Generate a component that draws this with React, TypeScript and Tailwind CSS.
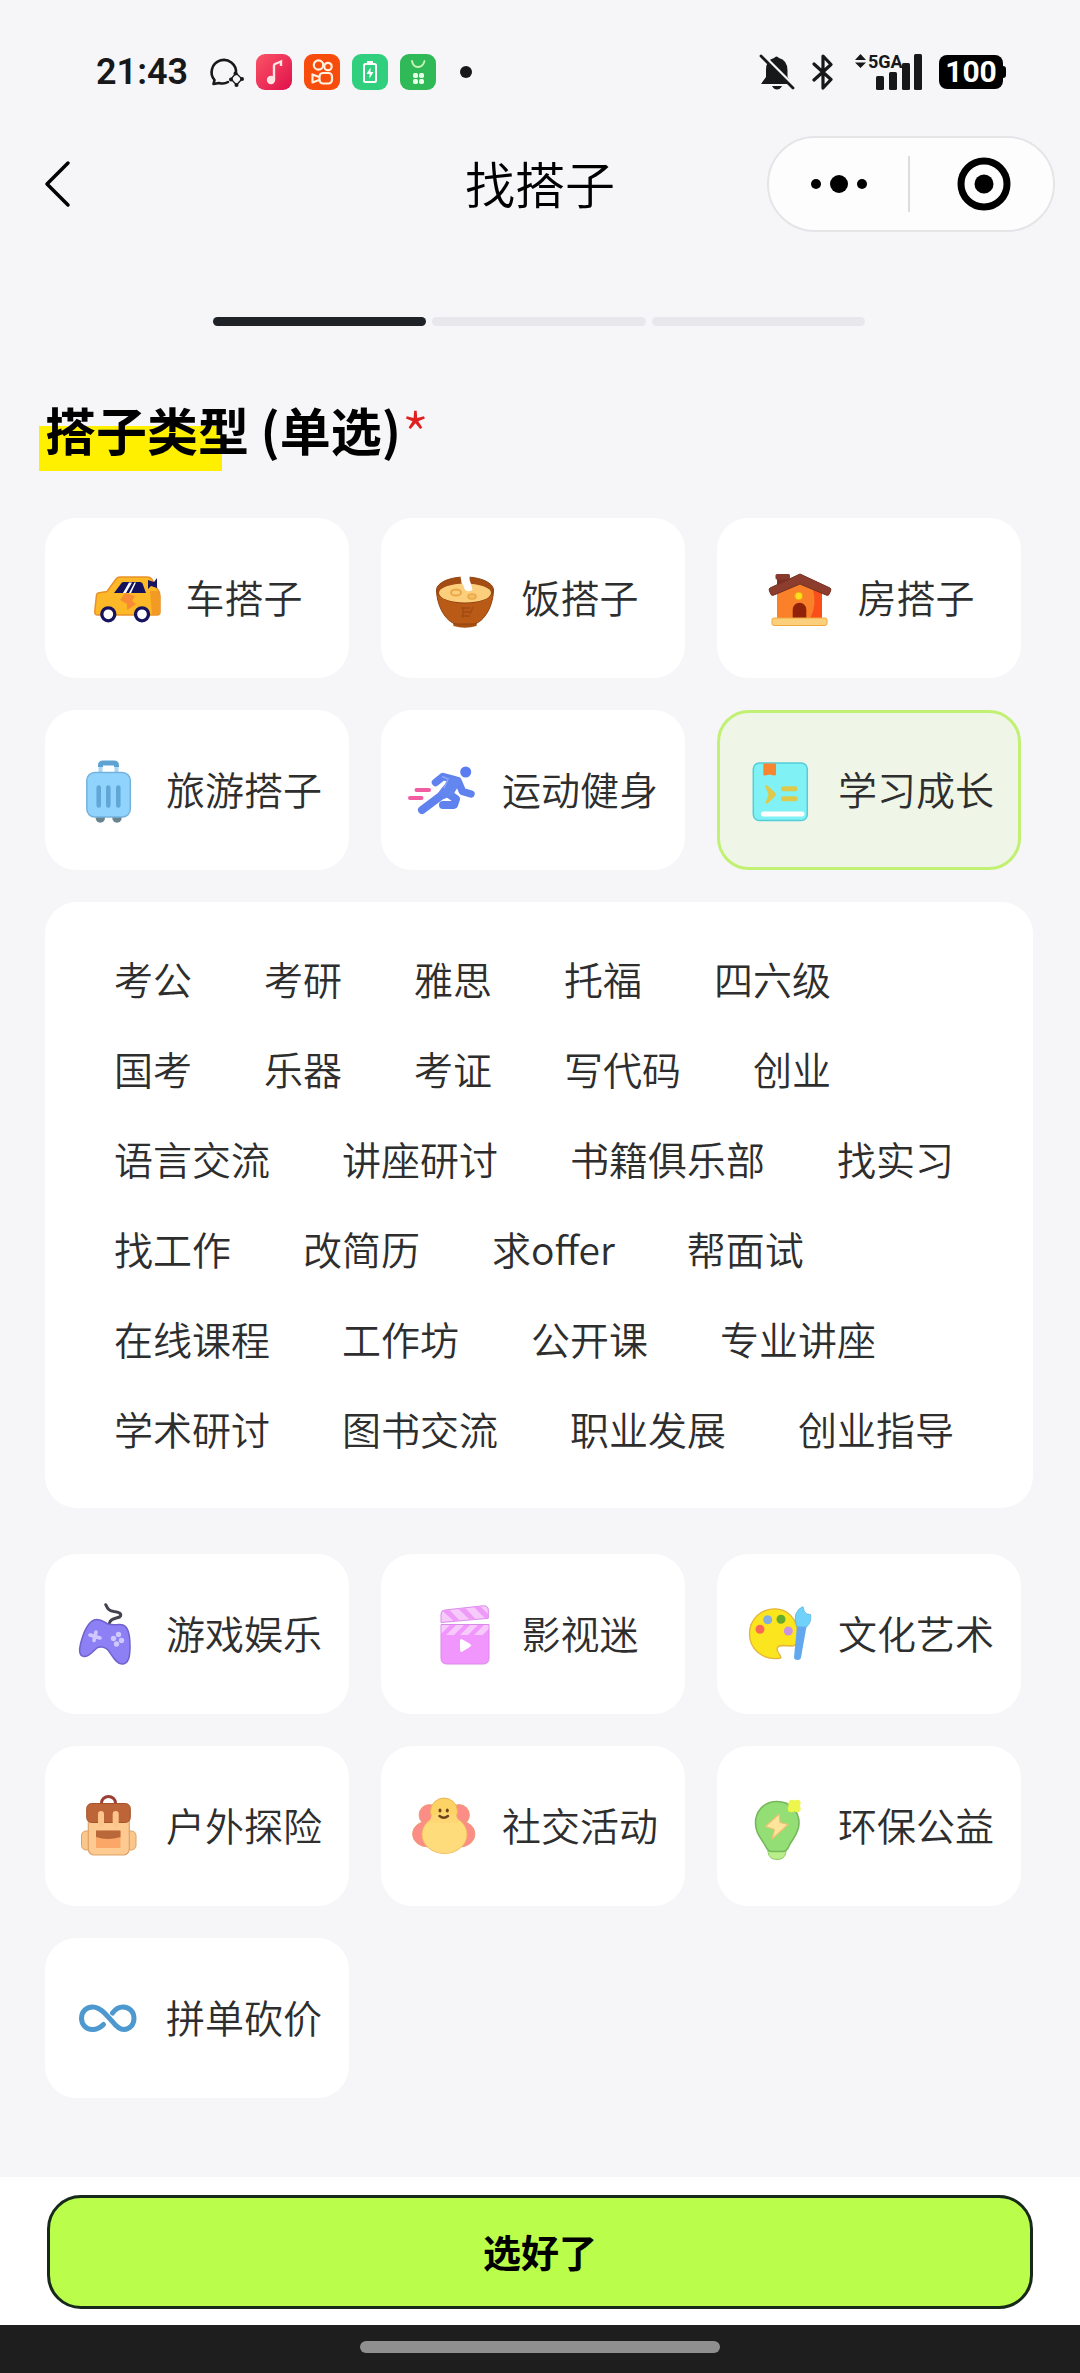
import React, { useState } from 'react';

interface Category {
  id: string;
  label: string;
  icon: React.ReactNode;
}

function CarIcon() {
  return (
    <svg viewBox="0 0 72 72" className="w-[72px] h-[72px] shrink-0" aria-hidden="true">
      <path d="M7 31 L16 29.5 L25 17 Q26.5 15 29 15 H56 Q60 15 62 19 L67 28 Q69 30 69 34 V50 Q69 53 66 53 H6 Q3.500 53 3.800 49 L5.500 33 Q6 31 7 31 Z" fill="#fdb827" stroke="#e8912a" strokeWidth="1.500" />
      <path d="M59 29 H67 Q69 31 69 34 V50 Q69 53 66 53 H61 Z" fill="#f39a25" />
      <path d="M23 31 L30.500 21 Q31 20 33 20 H49 Q51 20 51.500 21.500 L55 31 Z" fill="#14125c" />
      <path d="M32 31 L38 20.500 H41 L35 31 Z M38 31 L43.500 20.500 H45 L40 31 Z" fill="#ffffff" />
      <path d="M34 31 L44 34 L41 39 L45 42 L36 48 L36 42 L29 38 Z" fill="#f98b35" />
      <path d="M57 18 L63 20 L66 16 V26 L60 24 L57 27 Z" fill="#1b1660" />
      <circle cx="17.300" cy="52.300" r="6.500" fill="#ffffff" stroke="#16135f" strokeWidth="3.300" />
      <circle cx="51" cy="52.300" r="6.500" fill="#ffffff" stroke="#16135f" strokeWidth="3.300" />
    </svg>
  );
}

function BowlIcon() {
  return (
    <svg viewBox="0 0 72 72" className="w-[72px] h-[72px] shrink-0" aria-hidden="true">
      <path d="M26 60 H50 L49.500 64 Q38 67.500 26.500 64 Z" fill="#a8500f" />
      <path d="M9.500 28 C10 48 22 62 30 62 H46 C54 62 66 48 66.500 28 Z" fill="#b95a17" stroke="#8f4412" strokeWidth="1" />
      <ellipse cx="38" cy="28" rx="28.500" ry="13" fill="#a34d14" stroke="#8f4412" strokeWidth="1" />
      <ellipse cx="38" cy="31" rx="26" ry="9.500" fill="#fbcf7c" />
      <ellipse cx="29" cy="30.500" rx="5" ry="3" fill="#fbcf7c" stroke="#e9a848" strokeWidth="2" />
      <ellipse cx="45" cy="34.500" rx="4" ry="2.500" fill="#f5bd62" stroke="#e9a848" strokeWidth="1.500" />
      <path d="M33.500 14 H42.500 Q42 18 44 22 L45.500 28 Q40 31 37.500 27 Q36.500 23 34.500 21 Z" fill="#ffffff" />
      <path d="M34 46 H43 M35 50 H43 M34 54 H43 M36 45 V56 M46 45 L43 52" stroke="#a04c14" strokeWidth="1.300" fill="none" />
    </svg>
  );
}

function HouseIcon() {
  return (
    <svg viewBox="0 0 72 72" className="w-[72px] h-[72px] shrink-0" aria-hidden="true">
      <rect x="14" y="15" width="12" height="12" fill="#7d3126" />
      <rect x="12.500" y="12" width="14.500" height="5.500" rx="1.500" fill="#8a3a2c" />
      <path d="M14 29 L36.500 19 L59 29 V57 H14 Z" fill="#fa802a" />
      <path d="M49 24 L59 29 V57 H47 Q55 42 49 24 Z" fill="#f9501b" />
      <path d="M37 12 L67 26 Q68.500 27 67.500 29 L66 32.500 Q65 34 63 33 L37 22 L11 33 Q9 34 8 32.500 L6.500 29 Q5.500 27 7 26 Z" fill="#8c3d2e" stroke="#75301f" strokeWidth="1" />
      <circle cx="35.700" cy="34" r="4" fill="#ffdd1f" stroke="#ef9b1a" strokeWidth="1" />
      <path d="M29.700 57 V47.500 A6.800 6.800 0 0 1 43.300 47.500 V57 Z" fill="#8f2208" />
      <rect x="9" y="56" width="55" height="7.500" rx="2" fill="#fccf7c" stroke="#f0a93c" strokeWidth="1" />
    </svg>
  );
}

function SuitcaseIcon() {
  return (
    <svg viewBox="0 0 72 72" className="w-[72px] h-[72px] shrink-0" aria-hidden="true">
      <circle cx="28.300" cy="64" r="4.700" fill="#69838f" />
      <circle cx="45" cy="64" r="4.700" fill="#69838f" />
      <path d="M28.500 19 V11.500 Q28.500 9 31 9 H42 Q44.500 9 44.500 11.500 V19" fill="none" stroke="#a9d8f5" strokeWidth="4" />
      <path d="M28.500 13 V11.500 Q28.500 9 31 9 H42 Q44.500 9 44.500 11.500 V13" fill="none" stroke="#5fa3d3" strokeWidth="5" />
      <rect x="14.800" y="18.500" width="43.500" height="44.500" rx="8" fill="#90d3fd" stroke="#74b2dc" strokeWidth="1.500" />
      <path d="M26.700 33.500 V51.500 M36.300 33.500 V51.500 M46.300 33.500 V51.500" stroke="#60a6d6" strokeWidth="4.500" strokeLinecap="round" />
    </svg>
  );
}

function RunnerIcon() {
  return (
    <svg viewBox="0 0 72 72" className="w-[72px] h-[72px] shrink-0" aria-hidden="true">
      <path d="M8.500 36 H21 M2 44 H13.500" stroke="#f25ca2" strokeWidth="4" strokeLinecap="round" />
      <circle cx="57.700" cy="18" r="5.500" fill="#5b7cf0" />
      <g fill="none" stroke="#5f82ee" strokeLinecap="round" strokeLinejoin="round">
        <path d="M27.500 28.500 L35 22.500 L48 26" strokeWidth="7.500" />
        <path d="M50 27 L54.500 37.500 L63 40" strokeWidth="7.500" />
        <path d="M38 38 L14 56" strokeWidth="8" />
        <path d="M38 38 L48 45 L46 51 L35 51" strokeWidth="8" />
      </g>
      <path d="M35 22 L51 24.500 Q54 26 51 31 L45 41 L36 45 L30 39 Q34 33 40 27 Z" fill="#6487ef" />
      <path d="M34 22.500 L40 25 L36 34" fill="none" stroke="#8ba6f5" strokeWidth="1.500" />
    </svg>
  );
}

function BookIcon() {
  return (
    <svg viewBox="0 0 72 72" className="w-[72px] h-[72px] shrink-0" aria-hidden="true">
      <rect x="9.300" y="9" width="54" height="57.500" rx="6" fill="#80f1f5" stroke="#54cdd8" strokeWidth="1.500" />
      <path d="M19.300 9.500 H32 V20 Q32 21.700 30 21.500 L25.600 20.500 L21 21.500 Q19.300 21.700 19.300 20 Z" fill="#f98430" />
      <path d="M21 32 Q22 30.500 24 32 L31 38.500 Q33 40.500 31 42.500 L24 49 Q22 50.500 21.500 48.500 L24.500 40.500 Z" fill="#ddca4d" />
      <path d="M39.500 34.700 H51 M39.500 44.700 H51" stroke="#ddca4d" strokeWidth="5" strokeLinecap="round" />
      <path d="M19.500 60 H58" stroke="#ffffff" strokeWidth="5" strokeLinecap="round" />
    </svg>
  );
}

function GamepadIcon() {
  return (
    <svg viewBox="0 0 72 72" className="w-[72px] h-[72px] shrink-0" aria-hidden="true">
      <path d="M33.700 6.700 C36 12 38 13 42 13.500 C47 14 49.500 15.500 48.500 18 C47 21 39 19 37.500 25" fill="none" stroke="#43434f" strokeWidth="3" strokeLinecap="round" />
      <path d="M22 22 C28 20 32 24 36 26 C42 28 46 25.500 51 27 C57 29 58 38 58 48 C58 58 57 66 50 66 C44 66 40 57 36 52 C33 49 28 48 25 50 C20 54 17 59 12 58.500 C7 58 7 52 8.500 46 C11 36 15 25 22 22 Z" fill="#8d7ff4" stroke="#7062cd" strokeWidth="1.500" />
      <path d="M24 34 L22 42.500 M18 37 L28 40" stroke="#cfc8ff" strokeWidth="3.600" strokeLinecap="round" />
      <circle cx="46.500" cy="36.500" r="2.700" fill="#cfc8ff" />
      <circle cx="41.500" cy="40.500" r="2.700" fill="#cfc8ff" />
      <circle cx="49.500" cy="42.500" r="2.700" fill="#cfc8ff" />
      <circle cx="44.500" cy="46" r="2.700" fill="#cfc8ff" />
    </svg>
  );
}

function ClapperIcon() {
  return (
    <svg viewBox="0 0 72 72" className="w-[72px] h-[72px] shrink-0" aria-hidden="true">
      <path d="M14 16 Q14 12.300 18 12 L56 7.800 Q61.300 7.500 61.300 12 V20.300 L14 24.500 Z" fill="#f6cbfb" stroke="#d98ae8" strokeWidth="1" />
      <path d="M15 12.500 L27 23.300 L33 22.800 L22 11.500 Z M31 10.500 L43 21.900 L49 21.400 L38 9.800 Z M47 9 L58 20.500 L61 20.200 V16 L53 8 Z" fill="#ee9bf8" />
      <path d="M14 26.500 H62 V60 Q62 66 56 66 H20 Q14 66 14 60 Z" fill="#f196fc" stroke="#d98ae8" strokeWidth="1" />
      <path d="M14.500 27 H23 L14.500 35.500 Z M29 27 H37 L27 37 H19 Z M43 27 H51 L41 37 H33 Z M57 27 H61.500 V31 L55.500 37 H47 Z" fill="#f6cbfb" />
      <path d="M33.500 42.500 Q33.500 41 35 41.700 L43 46.300 Q44.500 47.300 43 48.400 L35 53.300 Q33.500 54 33.500 52.500 Z" fill="#ffffff" stroke="#ffffff" strokeWidth="1" />
    </svg>
  );
}

function PaletteIcon() {
  return (
    <svg viewBox="0 0 72 72" className="w-[72px] h-[72px] shrink-0" aria-hidden="true">
      <path d="M31 10.800 C44 10.800 53 21 53.500 35 Q54 48.500 48 48 L38 47.500 C33 47.500 32 51 34.500 55 C36.500 58 39 60.500 34 60.500 C18 61.500 5.500 51 5.500 36 C5.500 21 17 10.800 31 10.800 Z" fill="#fbe51f" stroke="#e3b53a" strokeWidth="1.300" />
      <circle cx="23.700" cy="21.700" r="4.500" fill="#84aee0" />
      <circle cx="37" cy="21.300" r="4.500" fill="#67ac2c" />
      <circle cx="16" cy="31.300" r="4.500" fill="#f96a55" />
      <circle cx="44.300" cy="33" r="4.500" fill="#cb94e3" />
      <path d="M53 28.500 H62.500 L57 59.500 Q56.500 62 53.500 62 Q50 62 50 59 Z" fill="#63a8ee" />
      <path d="M59 8.700 Q60 15 63 16 L66.500 16.500 Q68 24 62.500 29 L53 28.500 Q49.500 22 52 15.500 Q54 10.500 59 8.700 Z" fill="#70d1fb" stroke="#5db5e2" strokeWidth="0.800" />
    </svg>
  );
}

function BackpackIcon() {
  return (
    <svg viewBox="0 0 72 72" className="w-[72px] h-[72px] shrink-0" aria-hidden="true">
      <path d="M29.500 15 V13 A6.800 6.300 0 0 1 43.500 13 V15" fill="none" stroke="#9c3f36" strokeWidth="3" />
      <rect x="9.500" y="41" width="12" height="19" rx="4.500" fill="#fbc68a" stroke="#dea268" strokeWidth="1" />
      <rect x="52" y="41" width="12" height="19" rx="4.500" fill="#fbc68a" stroke="#dea268" strokeWidth="1" />
      <rect x="16.300" y="20" width="41" height="45" rx="6" fill="#fdcb92" stroke="#dea268" strokeWidth="1.200" />
      <rect x="14.700" y="13.500" width="43.600" height="19" rx="5" fill="#bd6538" stroke="#a5532b" strokeWidth="1" />
      <path d="M29 24 V34 M43.700 24 V34" stroke="#fdc58a" strokeWidth="6" strokeLinecap="round" />
      <rect x="24" y="40.500" width="24.500" height="17.500" rx="1" fill="#fba768" />
      <path d="M24 40.500 H48.500 V47 Q36 51 24 47 Z" fill="#b9683a" />
    </svg>
  );
}

function SocialIcon() {
  return (
    <svg viewBox="0 0 72 72" className="w-[72px] h-[72px] shrink-0" aria-hidden="true">
      <g fill="#fb8c86" stroke="#e8a070" strokeWidth="0.800">
        <circle cx="21.500" cy="25" r="10.500" />
        <circle cx="51" cy="25" r="10.500" />
        <ellipse cx="20" cy="44" rx="15.500" ry="13" />
        <ellipse cx="52" cy="44" rx="15" ry="13" />
      </g>
      <circle cx="36" cy="21.500" r="13.500" fill="#fed365" stroke="#edb45b" strokeWidth="1" />
      <ellipse cx="36.500" cy="44.500" rx="22.500" ry="19" fill="#fedc7c" stroke="#f5bd63" strokeWidth="1" />
      <path d="M24 25 Q36 21 48 25 L51 33 H21 Z" fill="#fed674" />
      <ellipse cx="32" cy="20.500" rx="1.500" ry="2" fill="#6e431b" />
      <ellipse cx="39.300" cy="20.500" rx="1.500" ry="2" fill="#6e431b" />
      <path d="M31.500 26 Q35.700 29.500 40 26" fill="none" stroke="#6e431b" strokeWidth="2.500" strokeLinecap="round" />
    </svg>
  );
}

function BulbIcon() {
  return (
    <svg viewBox="0 0 72 72" className="w-[72px] h-[72px] shrink-0" aria-hidden="true">
      <path d="M24 58 H42 V62 Q41 69.500 33 69.500 Q25 69.500 24 62 Z" fill="#b9ee8a" stroke="#8ccb67" strokeWidth="1" />
      <path d="M33 11.500 C46 11.500 55 21 55 33 C55 44 48 49 45 56 Q43 61.500 38 61.500 H28 Q24 61.500 22 57 C18 49 11.500 44 11.500 33 C11.500 21 20 11.500 33 11.500 Z" fill="#93df76" stroke="#75b75a" strokeWidth="1.600" />
      <path d="M35.300 24 L21.500 36.500 L30.500 39.500 L28 49 L44 34.500 L36 32.500 Z" fill="#fee59b" stroke="#efbf74" strokeWidth="1.200" strokeLinejoin="round" />
      <path d="M45.500 10.500 Q48 9 50.300 10.500 Q53 9 56 10.500 Q57.500 13 56 16 Q57.500 19 56 21.500 Q53 23 50.300 21.500 Q47 23 44.500 21.500 Q43 19 44.500 16 Q43.500 13 45.500 10.500 Z" fill="#ecf64c" />
    </svg>
  );
}

function InfinityIcon() {
  return (
    <svg viewBox="0 0 72 72" className="w-[72px] h-[72px] shrink-0" aria-hidden="true">
      <path
        d="M31.500 42.500 C28.500 45.500 25 47.500 20.500 47.500 C14 47.500 9.500 42.500 9.500 36.300 C9.500 30 14 25 20.500 25 C26 25 29.500 28 33 31.500 L40 39 C43 43 47 47.500 52 47.500 C58 47.500 62 42.500 62 36.300 C62 30 57.500 25 51 25 C46.500 25 43 27.500 40.500 31"
        fill="none"
        stroke="#4c98cf"
        strokeWidth="5"
        strokeLinecap="round"
      />
    </svg>
  );
}

const topCategories: Category[] = [
  { id: 'car', label: '车搭子', icon: <CarIcon /> },
  { id: 'food', label: '饭搭子', icon: <BowlIcon /> },
  { id: 'house', label: '房搭子', icon: <HouseIcon /> },
  { id: 'travel', label: '旅游搭子', icon: <SuitcaseIcon /> },
  { id: 'sport', label: '运动健身', icon: <RunnerIcon /> },
  { id: 'study', label: '学习成长', icon: <BookIcon /> },
];

const bottomCategories: Category[] = [
  { id: 'game', label: '游戏娱乐', icon: <GamepadIcon /> },
  { id: 'movie', label: '影视迷', icon: <ClapperIcon /> },
  { id: 'art', label: '文化艺术', icon: <PaletteIcon /> },
  { id: 'outdoor', label: '户外探险', icon: <BackpackIcon /> },
  { id: 'social', label: '社交活动', icon: <SocialIcon /> },
  { id: 'green', label: '环保公益', icon: <BulbIcon /> },
  { id: 'deal', label: '拼单砍价', icon: <InfinityIcon /> },
];

const studyTags = [
  '考公', '考研', '雅思', '托福', '四六级',
  '国考', '乐器', '考证', '写代码', '创业',
  '语言交流', '讲座研讨', '书籍俱乐部', '找实习',
  '找工作', '改简历', '求offer', '帮面试',
  '在线课程', '工作坊', '公开课', '专业讲座',
  '学术研讨', '图书交流', '职业发展', '创业指导',
];

function StatusBar() {
  return (
    <div className="flex items-center justify-between h-24 mt-6 pl-[96px] pr-[74px] text-[#17181a]">
      <div className="flex items-center">
        <span className="font-[Roboto] font-semibold text-[36px] leading-none">21:43</span>
        <div className="flex items-center gap-3 ml-5">
          <svg viewBox="0 0 36 36" className="w-9 h-9" aria-hidden="true">
            <path d="M20 28 Q16 30.500 11 29 L5.500 30 L6.500 26 A12.200 12.200 0 1 1 28 19" fill="none" stroke="currentColor" strokeWidth="2.600" strokeLinejoin="round" strokeLinecap="round" />
            <path d="M28 19 L34 25 L28.500 31 L23 25 Z" fill="none" stroke="currentColor" strokeWidth="1.300" />
            <circle cx="27.500" cy="19.500" r="2" fill="currentColor" />
            <circle cx="34" cy="25" r="2" fill="currentColor" />
            <circle cx="28.500" cy="31" r="2" fill="currentColor" />
            <circle cx="23" cy="25.500" r="2" fill="currentColor" />
          </svg>
          <svg viewBox="0 0 36 36" className="w-9 h-9" aria-hidden="true">
            <defs>
              <linearGradient id="music" x1="0" y1="0" x2="1" y2="1">
                <stop offset="0" stopColor="#fa5566" />
                <stop offset="1" stopColor="#e00f4c" />
              </linearGradient>
            </defs>
            <rect width="36" height="36" rx="9" fill="url(#music)" />
            <circle cx="15" cy="26" r="4.200" fill="#ffe3e3" />
            <path d="M18 26 V11.500 Q18 10.500 19 10 L25 7.500 V12" fill="none" stroke="#ffe3e3" strokeWidth="2.400" />
          </svg>
          <svg viewBox="0 0 36 36" className="w-9 h-9" aria-hidden="true">
            <rect width="36" height="36" rx="9" fill="#f74c0c" />
            <g fill="none" stroke="#fff1e0" strokeWidth="2.200">
              <circle cx="14.500" cy="11" r="4.700" />
              <circle cx="24" cy="12.500" r="3.700" />
              <rect x="15.500" y="19" width="12.500" height="10.500" rx="3.500" />
              <path d="M15 23 L8.500 20.500 V28.500 L15 26" strokeLinejoin="round" />
            </g>
          </svg>
          <svg viewBox="0 0 36 36" className="w-9 h-9" aria-hidden="true">
            <rect width="36" height="36" rx="9" fill="#2fcf7d" />
            <rect x="12" y="10" width="12" height="18" rx="1.500" fill="none" stroke="#ffffff" strokeWidth="2" />
            <rect x="15" y="7" width="6" height="3" fill="#ffffff" />
            <path d="M18.500 13.500 L14.500 20 H17.500 V24.500 L21.500 18 H18.500 Z" fill="#ffffff" />
          </svg>
          <svg viewBox="0 0 36 36" className="w-9 h-9" aria-hidden="true">
            <rect width="36" height="36" rx="9" fill="#2fb957" />
            <path d="M12 7 Q13 13 18 13 Q23 13 24.500 7" fill="none" stroke="#c9f5b8" strokeWidth="1.800" strokeLinecap="round" />
            <g fill="#e9ffe6">
              <rect x="13" y="19" width="5" height="5" rx="1.700" />
              <rect x="19" y="19" width="5" height="5" rx="1.700" />
              <rect x="13" y="25" width="5" height="5" rx="1.700" />
              <rect x="19" y="25" width="5" height="5" rx="1.700" />
            </g>
          </svg>
          <span className="w-3 h-3 ml-3 rounded-full bg-[#17181a]" />
        </div>
      </div>

      <div className="flex items-center">
        <svg viewBox="0 0 36 36" className="w-9 h-9" aria-hidden="true">
          <path d="M2 30 L7 23 V16 Q7 6 15 4 Q17.500 1 20 4 Q28 6 28.500 16 V23 L32.500 30 Z" fill="currentColor" />
          <path d="M13 32 H23 Q21 35.500 18 35.500 Q15 35.500 13 32 Z" fill="currentColor" />
          <path d="M4 1 L36 33" stroke="#f6f6f8" strokeWidth="3" />
          <path d="M2 2 L34 34" stroke="currentColor" strokeWidth="2.800" strokeLinecap="round" />
        </svg>
        <svg viewBox="0 0 24 36" className="w-6 h-9 ml-4" aria-hidden="true">
          <path d="M3 10 L20 25.500 L12 34 V2 L20 10.500 L3 26" fill="none" stroke="currentColor" strokeWidth="3.200" strokeLinejoin="round" strokeLinecap="round" />
        </svg>
        <svg viewBox="0 -5 68 48" className="w-[68px] h-12 ml-5" aria-hidden="true">
          <path d="M5.500 1 L11 7 H0 Z M5.500 15 L11 9.500 H0 Z" fill="currentColor" />
          <text x="13" y="15" fontFamily="Roboto" fontSize="18" fontWeight="700" fill="currentColor">5GA</text>
          <rect x="21" y="23" width="8" height="14" rx="1.500" fill="currentColor" />
          <rect x="34" y="19" width="8" height="18" rx="1.500" fill="currentColor" />
          <rect x="47" y="10" width="8" height="27" rx="1.500" fill="currentColor" />
          <rect x="59" y="1" width="8" height="36" rx="1.500" fill="currentColor" />
        </svg>
        <div className="flex items-center ml-4">
          <span className="flex items-center justify-center w-16 h-[34px] rounded-lg bg-black text-white font-[Roboto] font-bold text-[30px] leading-none">100</span>
          <span className="w-[3px] h-3 rounded-r-sm bg-black" />
        </div>
      </div>
    </div>
  );
}

function NavBar() {
  return (
    <header className="grid grid-cols-[1fr_auto_1fr] items-center h-32 px-[25px]">
      <button type="button" aria-label="返回" className="justify-self-start pl-4">
        <svg viewBox="0 0 32 48" className="w-8 h-12" aria-hidden="true">
          <path d="M27 3 L6 24 L27 45" fill="none" stroke="#000000" strokeWidth="3.500" strokeLinecap="round" strokeLinejoin="round" />
        </svg>
      </button>
      <h1 className="pb-1 text-[50px] leading-[60px] font-[350] text-black">找搭子</h1>
      <div className="justify-self-end flex items-center w-[288px] h-24 rounded-full border-2 border-[#e5e5e8] bg-[#fdfdfe]">
        <button type="button" aria-label="更多" className="flex flex-1 items-center justify-center gap-[9px]">
          <span className="w-[10px] h-[10px] rounded-full bg-black" />
          <span className="w-[18px] h-[18px] rounded-full bg-black" />
          <span className="w-[10px] h-[10px] rounded-full bg-black" />
        </button>
        <span className="w-[2px] h-14 bg-[#dcdcdf]" />
        <button type="button" aria-label="关闭" className="flex flex-1 items-center justify-center pl-1">
          <svg viewBox="0 0 54 54" className="w-[54px] h-[54px]" aria-hidden="true">
            <circle cx="27" cy="27" r="23" fill="none" stroke="#000000" strokeWidth="7" />
            <circle cx="27" cy="27" r="9.500" fill="#000000" />
          </svg>
        </button>
      </div>
    </header>
  );
}

interface CategoryGridProps {
  categories: Category[];
  selected: string;
  onSelect: (id: string) => void;
}

function CategoryGrid({ categories, selected, onSelect }: CategoryGridProps) {
  return (
    <div className="grid grid-cols-3 gap-8 pr-3">
      {categories.map((category) => (
        <button
          key={category.id}
          type="button"
          aria-pressed={selected === category.id}
          onClick={() => onSelect(category.id)}
          className={
            selected === category.id
              ? 'flex items-center justify-center gap-[22px] h-40 rounded-[32px] border-[3px] border-[#c2f073] bg-[#eff6e8]'
              : 'flex items-center justify-center gap-[22px] h-40 rounded-[32px] border-[3px] border-white bg-white'
          }
        >
          {category.icon}
          <span className="pb-1 text-[39px] leading-[56px] whitespace-nowrap">{category.label}</span>
        </button>
      ))}
    </div>
  );
}

export default function App() {
  const [selected, setSelected] = useState('study');
  const [tag, setTag] = useState('');

  return (
    <div className="flex flex-col min-h-screen bg-[#f6f6f8] font-['Noto_Sans_CJK_SC',sans-serif] font-[350] text-[#2e2e2e]">
      <StatusBar />
      <NavBar />

      <main className="flex-1 pl-[45px] pr-[47px] pb-8">
        {/* Step progress */}
        <div className="flex gap-[6px] w-[66%] mx-auto mt-[69px]">
          <span className="flex-1 h-[9px] rounded-full bg-[#1f2328]" />
          <span className="flex-1 h-[9px] rounded-full bg-[#e7e7ec]" />
          <span className="flex-1 h-[9px] rounded-full bg-[#e7e7ec]" />
        </div>

        <h2 className="relative isolate flex mt-[73px] text-[51px] leading-[60px] font-bold text-black">
          <span className="absolute -z-10 -left-[6px] top-[27px] w-[183px] h-[45px] bg-[#fff000]" />
          搭子类型 (单选)
          <span className="pt-1 text-[64px] font-light text-[#e02020]">*</span>
        </h2>

        <div className="mt-[55px]">
          <CategoryGrid categories={topCategories} selected={selected} onSelect={setSelected} />
        </div>

        {/* Sub tags of the selected category */}
        <div className="flex flex-wrap gap-x-[72px] mt-8 mb-[46px] px-[69px] pt-[31px] pb-[35px] rounded-[32px] bg-white">
          {studyTags.map((name) => (
            <button
              key={name}
              type="button"
              aria-pressed={tag === name}
              onClick={() => setTag(name)}
              className="text-[39px] leading-[90px] whitespace-nowrap"
            >
              {name}
            </button>
          ))}
        </div>

        <CategoryGrid categories={bottomCategories} selected={selected} onSelect={setSelected} />
      </main>

      <footer>
        <div className="px-[47px] pt-[18px] pb-4 bg-white">
          <button
            type="button"
            className="w-full h-[114px] pb-1 rounded-[34px] border-[3px] border-[#17291a] bg-[#bbfd4b] text-[38px] font-bold text-black"
          >
            选好了
          </button>
        </div>
        <div className="flex items-center justify-center h-12 bg-[#1e1e1e]">
          <span className="w-1/3 h-3 -mt-1 rounded-full bg-[#8f8f8f]" />
        </div>
      </footer>
    </div>
  );
}
